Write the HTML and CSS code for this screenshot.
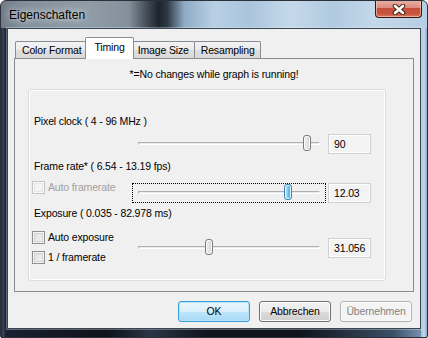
FILE: index.html
```html
<!DOCTYPE html>
<html>
<head>
<meta charset="utf-8">
<link rel="stylesheet" href="styles.css">
</head>
<body>
<div class="window">
  <div class="titlebar">
    <span class="title">Eigenschaften</span>
    <div class="close">
      <svg width="14" height="11" viewBox="0 0 14 11">
        <path d="M3 2 L11 9 M11 2 L3 9" stroke="#4a2418" stroke-width="4.6" stroke-linecap="round"/>
        <path d="M3 2 L11 9 M11 2 L3 9" stroke="#ffffff" stroke-width="2.6" stroke-linecap="round"/>
      </svg>
    </div>
  </div>
  <div class="client">
    <div class="tabs">
      <div class="tab">Color Format</div>
      <div class="tab active">Timing</div>
      <div class="tab">Image Size</div>
      <div class="tab">Resampling</div>
    </div>
    <div class="panel">
      <p class="note">*=No changes while graph is running!</p>
      <div class="group">
        <div class="label l1">Pixel clock ( 4 - 96 MHz )</div>
        <div class="row r1">
          <div class="left"></div>
          <div class="slider">
            <div class="track"></div>
            <div class="thumb" style="left:170px"></div>
          </div>
          <div class="edit">90</div>
        </div>
        <div class="label l2">Frame rate* ( 6.54 - 13.19 fps)</div>
        <div class="row r2">
          <div class="left">
            <label class="check disabled"><span class="box"></span>Auto framerate</label>
          </div>
          <div class="slider focused">
            <div class="track"></div>
            <div class="thumb hot" style="left:151px"></div>
          </div>
          <div class="edit">12.03</div>
        </div>
        <div class="label l3">Exposure ( 0.035 - 82.978 ms)</div>
        <div class="row r3">
          <div class="left stack">
            <label class="check"><span class="box"></span>Auto exposure</label>
            <label class="check"><span class="box"></span>1 / framerate</label>
          </div>
          <div class="slider">
            <div class="track"></div>
            <div class="thumb" style="left:72px"></div>
          </div>
          <div class="edit">31.056</div>
        </div>
      </div>
    </div>
    <div class="buttons">
      <button class="btn default">OK</button>
      <button class="btn">Abbrechen</button>
      <button class="btn disabled">Übernehmen</button>
    </div>
  </div>
</div>
</body>
</html>
```

FILE: styles.css
```css
html, body {
  margin: 0;
  padding: 0;
  background: #ffffff;
}

.window {
  width: 428px;
  height: 338px;
  box-sizing: border-box;
  display: flex;
  flex-direction: column;
  border: 1px solid #2c3038;
  border-radius: 6px 6px 2px 2px;
  overflow: hidden;
  font-family: "Liberation Sans", Arial, sans-serif;
  font-size: 10.5px;
  letter-spacing: -0.15px;
  color: #000;
  background:
    linear-gradient(90deg, #1c2433 0, #3a4760 2px, #222b3b 4px, #141a26 6px) 0 27px / 6px 320px no-repeat,
    linear-gradient(90deg, #9fbcd6 0, #c6dbec 3px, #87a9c8 6px) 420px 27px / 6px 320px no-repeat,
    linear-gradient(90deg, #1a2131 0, #0e1219 25%, #2b3545 35%, #10151d 48%, #0f131a 70%, #3b4f66 92%, #7e9fbe 100%) 0 328px / 100% 9px no-repeat,
    linear-gradient(90deg, #6f7c88 0, #84919c 6%, #909ca6 20%, #84909b 30%, #46505b 34%, #1d242c 37%, #2e3844 39%, #8eaac4 43%, #b9d0e4 50%, #a9c4dd 58%, #c6d9ea 68%, #b1cae0 78%, #c4d8ea 88%, #b6cee3 100%);
}

.titlebar {
  height: 27px;
  display: flex;
  justify-content: space-between;
  align-items: flex-start;
  flex: none;
}

.title {
  margin: 6px 0 0 8px;
  font-size: 12px;
  letter-spacing: 0;
  line-height: 16px;
  color: #000;
  text-shadow: 0 0 6px rgba(255, 255, 255, 0.8), 0 0 10px rgba(255, 255, 255, 0.5);
}

.close {
  width: 47px;
  height: 18px;
  margin: -1px 5px 0 0;
  box-sizing: border-box;
  border: 1px solid #3d1410;
  border-top: none;
  border-radius: 0 0 4px 4px;
  background: linear-gradient(#eab3a6 0, #dc8e7e 45%, #c4503c 50%, #c8543e 80%, #d87a5e 100%);
  box-shadow: inset 0 0 0 1px rgba(255, 220, 210, 0.55);
  display: flex;
  align-items: center;
  justify-content: center;
}

.close svg {
  display: block;
  margin-top: 1px;
}

.client {
  flex: 1;
  margin: 0 6px 8px 6px;
  border: 1px solid #3a4552;
  background: #f0f0f0;
  display: flex;
  flex-direction: column;
  padding: 8px 6px 0 6px;
  box-shadow: 0 0 0 1px rgba(230, 240, 250, 0.35);
}

.tabs {
  display: flex;
  height: 21px;
  padding-left: 1px;
  position: relative;
  z-index: 2;
  flex: none;
}

.tab {
  margin-top: 4px;
  height: 17px;
  box-sizing: border-box;
  border: 1px solid #898c95;
  border-bottom: none;
  border-radius: 2px 2px 0 0;
  padding: 0 5px 0 6px;
  line-height: 16px;
  background: linear-gradient(#f3f3f3, #ebebeb 50%, #dedede 51%, #d9d9d9);
  white-space: nowrap;
}

.tab + .tab {
  margin-left: -1px;
}

.tab.active {
  margin-top: 0;
  height: 22px;
  margin-left: -2px;
  margin-right: -2px;
  padding: 0 8px;
  line-height: 18px;
  background: #ffffff;
  position: relative;
  z-index: 3;
}

.panel {
  height: 234px;
  box-sizing: border-box;
  border: 1px solid #898c95;
  background: #f0f0f0;
  display: flex;
  flex-direction: column;
  position: relative;
  z-index: 1;
}

.note {
  margin: 9px 0 0 0;
  text-align: center;
  line-height: 13px;
}

.group {
  margin: 8px 0 0 13px;
  width: 358px;
  height: 192px;
  box-sizing: border-box;
  border: 1px solid #d5dfe5;
  border-radius: 3px;
  box-shadow: inset 0 0 0 1px #ffffff;
  padding: 0 0 0 3px;
  display: flex;
  flex-direction: column;
}

.label {
  line-height: 14px;
  margin-left: 2px;
}

.l1 { margin-top: 24px; }
.l2 { margin-top: 5px; }
.l3 { margin-top: 3px; }

.row {
  display: flex;
  align-items: center;
}

.r1 { margin-top: 6px; }
.r2 { margin-top: 8px; align-items: flex-start; }
.r2 .slider, .r2 .edit { margin-top: 2px; }
.r3 { margin-top: 11px; }

.left {
  width: 100px;
  flex: none;
}

.stack {
  display: flex;
  flex-direction: column;
  gap: 7px;
}

.check {
  display: flex;
  align-items: center;
  gap: 3px;
  height: 13px;
  line-height: 13px;
  white-space: nowrap;
}

.box {
  width: 13px;
  height: 13px;
  box-sizing: border-box;
  border: 1px solid #8e8f8f;
  background: linear-gradient(135deg, #dcdcdc, #f6f6f6);
  box-shadow: inset 0 0 0 1px #f4f4f4, inset 0 0 0 2px #d2d2d2;
  flex: none;
}

.check.disabled {
  color: #a0a0a0;
}

.check.disabled .box {
  border-color: #c5c5c5;
  background: #f4f4f4;
  box-shadow: inset 0 0 0 1px #f9f9f9, inset 0 0 0 2px #e6e6e6;
}

.slider {
  width: 194px;
  height: 20px;
  box-sizing: border-box;
  position: relative;
  flex: none;
  border: 1px solid transparent;
}

.slider.focused {
  border: 1px dotted #000;
}

.track {
  position: absolute;
  left: 5px;
  right: 5px;
  top: 7px;
  height: 3px;
  box-sizing: border-box;
  border-top: 1px solid #b0b0b0;
  border-left: 1px solid #b0b0b0;
  border-bottom: 1px solid #ffffff;
  border-right: 1px solid #ffffff;
  background: #e7eaea;
}

.thumb {
  position: absolute;
  top: 0;
  width: 8px;
  height: 16px;
  box-sizing: border-box;
  border: 1px solid #7b7b7b;
  border-radius: 3px;
  background: linear-gradient(90deg, #f3f3f3, #e3e3e3 50%, #d2d2d2);
  box-shadow: inset 0 0 0 1px #fafafa;
}

.thumb.hot {
  border-color: #3c7fb1;
  background: linear-gradient(90deg, #d9f0fc, #6fc7ef 50%, #3fa9dc);
  box-shadow: inset 0 0 0 1px #e6f6fe;
}

.edit {
  width: 43px;
  height: 20px;
  margin-left: 2px;
  box-sizing: border-box;
  border: 1px solid #d0d0d0;
  box-shadow: inset 0 0 0 1px #fdfdfd;
  background: #f3f3f3;
  padding-left: 5px;
  line-height: 18px;
  flex: none;
}

.buttons {
  display: flex;
  justify-content: flex-end;
  gap: 9px;
  padding: 9px 2px 0 0;
}

.btn {
  width: 72px;
  height: 21px;
  box-sizing: border-box;
  font-family: "Liberation Sans", Arial, sans-serif;
  font-size: 10.5px;
  letter-spacing: -0.15px;
  color: #000;
  border: 1px solid #707070;
  border-radius: 3px;
  background: linear-gradient(#f2f2f2, #ebebeb 50%, #dddddd 51%, #cfcfcf);
  box-shadow: inset 0 0 0 1px #fcfcfc;
  padding: 0;
  line-height: 19px;
}

.btn.default {
  border-color: #3c9ed8;
  background: linear-gradient(#eaf6fd, #d9f0fc 50%, #bee6fd 51%, #a7d9f5);
  box-shadow: inset 0 0 0 1px #b6e2fa;
}

.btn.disabled {
  color: #838383;
  border-color: #adb2b5;
  background: #f4f4f4;
  box-shadow: inset 0 0 0 1px #fbfbfb;
}
```
